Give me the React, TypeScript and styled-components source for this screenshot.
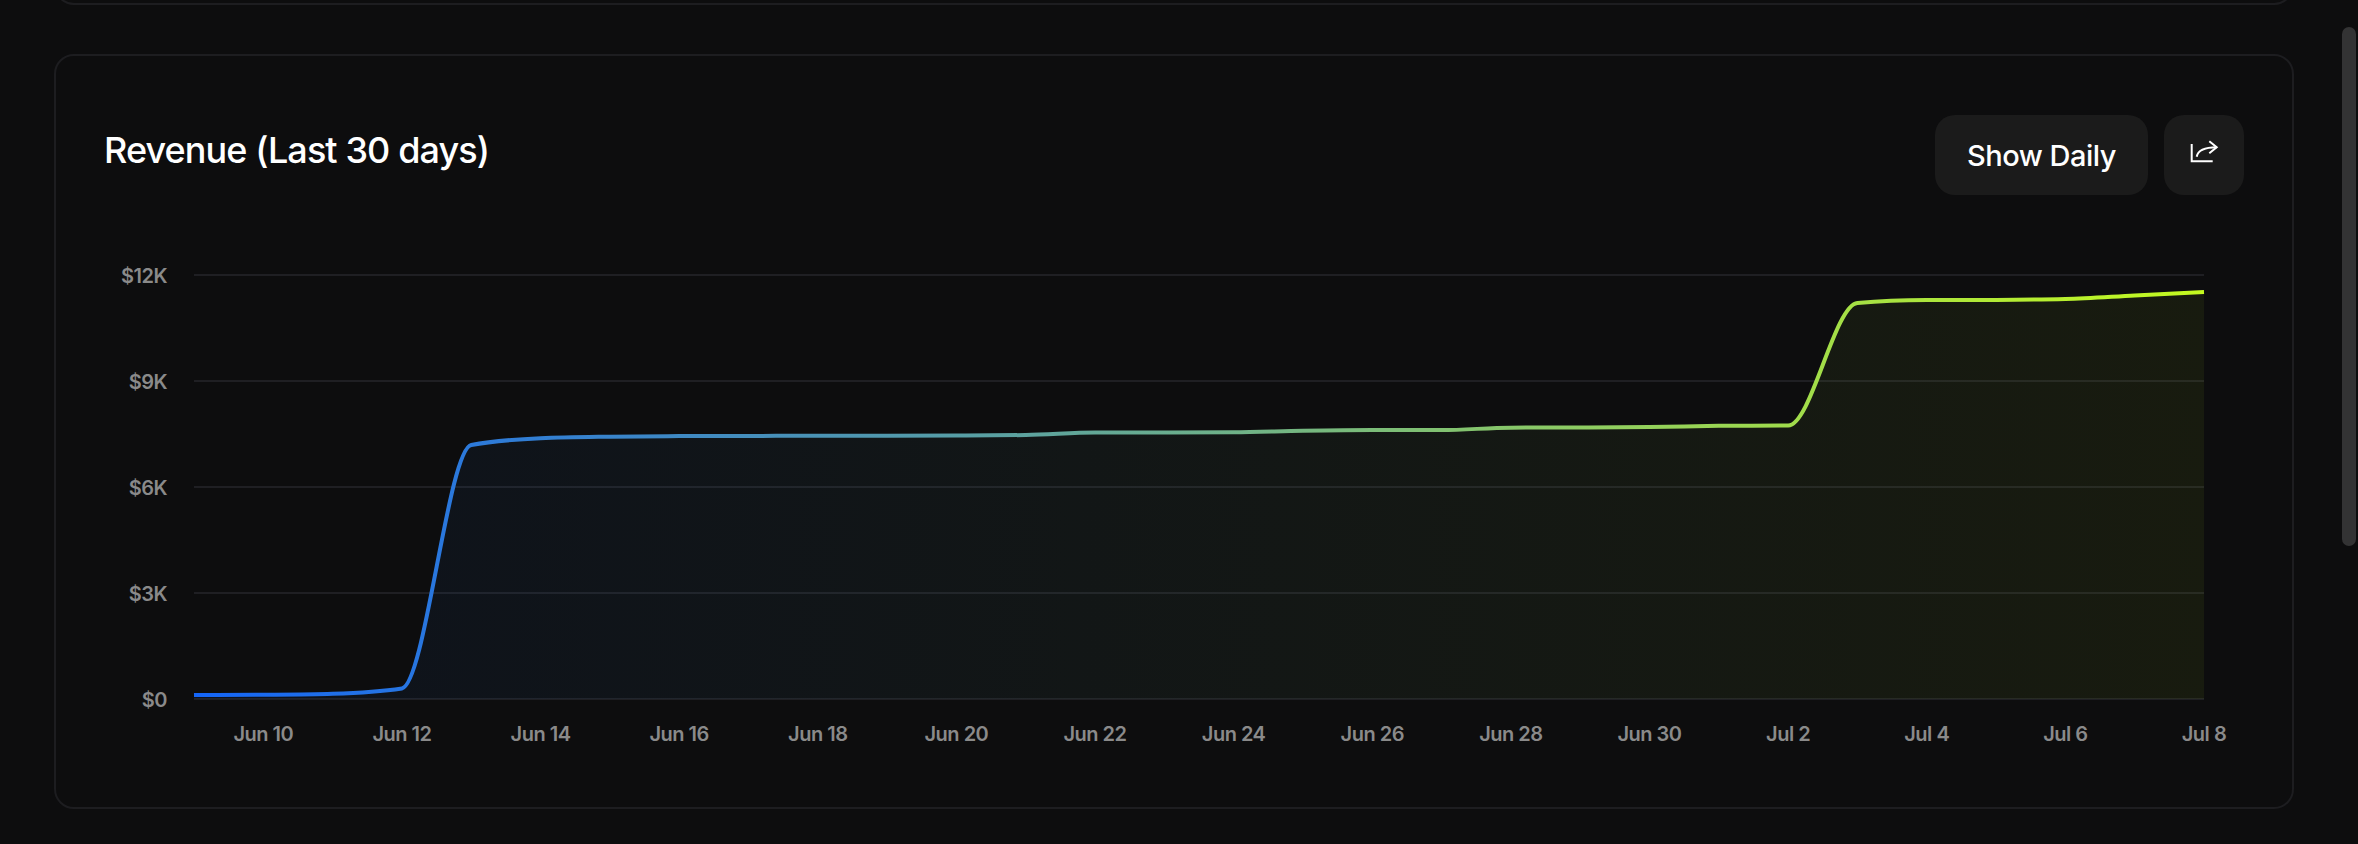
import React from "react";
import styled, { createGlobalStyle } from "styled-components";

const GlobalStyle = createGlobalStyle`
  html, body {
    margin: 0;
    padding: 0;
    height: 100%;
    overflow: hidden;
    background: #0d0d0e;
  }
`;

const Page = styled.div`
  display: flex;
  width: 2358px;
  height: 844px;
  overflow: hidden;
  background: #0d0d0e;
  font-family: Inter, "Liberation Sans", sans-serif;
`;

const Content = styled.main`
  flex: 1;
  min-width: 0;
  display: flex;
  flex-direction: column;
  gap: 49px;
  padding: 0 48px 0 54px;
`;

const PrevCard = styled.section`
  height: 40px;
  margin-top: -35px;
  flex-shrink: 0;
  box-sizing: border-box;
  border: 2px solid #1d1d20;
  border-radius: 20px;
`;

const Card = styled.section`
  box-sizing: border-box;
  height: 755px;
  flex-shrink: 0;
  padding: 59px 48px 48px;
  border: 2px solid #1d1d20;
  border-radius: 20px;
`;

const Header = styled.header`
  display: flex;
  justify-content: space-between;
  align-items: flex-start;
  height: 80px;
  margin-bottom: 44px;
`;

const Title = styled.h2`
  margin: 0;
  font-size: 36px;
  line-height: 70px;
  font-weight: 500;
  letter-spacing: -0.9px;
  color: #fff;
`;

const Actions = styled.div`
  display: flex;
  gap: 16px;
`;

const Button = styled.button<{ $square?: boolean }>`
  display: flex;
  align-items: center;
  justify-content: center;
  height: 80px;
  width: ${(p) => (p.$square ? "80px" : "213px")};
  padding: 0;
  border: none;
  border-radius: 20px;
  background: #1b1b1b;
  color: #fff;
  font-family: inherit;
  font-size: 29px;
  font-weight: 500;
  letter-spacing: -0.5px;
`;

const ChartSvg = styled.svg`
  display: block;
  width: 2140px;
  height: 520px;
  overflow: visible;
`;

const AxisLabel = styled.text`
  fill: #8a8a8a;
  font-family: Inter, "Liberation Sans", sans-serif;
  font-size: 20px;
  font-weight: 600;
  letter-spacing: -0.5px;
`;

const ScrollTrack = styled.div`
  flex-shrink: 0;
  width: 16px;
  padding: 27px 2px 0 0;
  box-sizing: border-box;
`;

const ScrollThumb = styled.div`
  height: 519px;
  border-radius: 7px;
  background: #333334;
`;

// chart geometry, svg local pixels
const LEFT = 90;
const RIGHT = 2100;
const ZERO_Y = 460;
const PX_PER_3K = 106;

const revenue = [
  110, 120, 150, 300, 7190, 7380, 7425, 7440, 7445, 7450, 7450, 7455, 7470,
  7540, 7545, 7550, 7590, 7610, 7610, 7680, 7685, 7695, 7730, 7740, 11207,
  11290, 11295, 11320, 11420, 11520,
];

const yTicks = [
  { label: "$0", value: 0 },
  { label: "$3K", value: 3000 },
  { label: "$6K", value: 6000 },
  { label: "$9K", value: 9000 },
  { label: "$12K", value: 12000 },
];

const xLabels = [
  "Jun 10", "Jun 12", "Jun 14", "Jun 16", "Jun 18", "Jun 20", "Jun 22",
  "Jun 24", "Jun 26", "Jun 28", "Jun 30", "Jul 2", "Jul 4", "Jul 6", "Jul 8",
];

const step = (RIGHT - LEFT) / (revenue.length - 1);
const toY = (v: number) => ZERO_Y - (v / 3000) * PX_PER_3K;
const points = revenue.map((v, i) => [LEFT + i * step, toY(v)] as const);

// monotone cubic, same idea as a monotoneX curve
const monotonePath = (pts: ReadonlyArray<readonly [number, number]>) => {
  const n = pts.length;
  const slopes: number[] = [];
  for (let i = 0; i < n - 1; i++) {
    slopes.push((pts[i + 1][1] - pts[i][1]) / (pts[i + 1][0] - pts[i][0]));
  }
  const tangents = pts.map((_, i) => {
    if (i === 0) return slopes[0];
    if (i === n - 1) return slopes[n - 2];
    const a = slopes[i - 1];
    const b = slopes[i];
    if (a * b <= 0) return 0;
    const size = Math.min(Math.abs(a), Math.abs(b), Math.abs(a + b) / 4) * 2;
    return a > 0 ? size : -size;
  });
  let d = `M${pts[0][0]},${pts[0][1]}`;
  for (let i = 0; i < n - 1; i++) {
    const dx = (pts[i + 1][0] - pts[i][0]) / 3;
    d += `C${pts[i][0] + dx},${pts[i][1] + dx * tangents[i]} ${pts[i + 1][0] - dx},${
      pts[i + 1][1] - dx * tangents[i + 1]
    } ${pts[i + 1][0]},${pts[i + 1][1]}`;
  }
  return d;
};

const linePath = monotonePath(points);
const areaPath = `${linePath}L${RIGHT},${ZERO_Y}L${LEFT},${ZERO_Y}Z`;

const ShareIcon = () => (
  <svg width="32" height="32" viewBox="0 0 32 32" fill="none" stroke="#fff" strokeWidth="2">
    <path d="M3.7 5V22.3H24.7" />
    <path d="M8.7 17.7C10 11 18 8.3 28.7 8.3" />
    <path d="M21.3 2.3L28.7 8.3L21.3 14.3" />
  </svg>
);

const RevenueChart = () => (
  <ChartSvg viewBox="0 0 2140 520">
    <defs>
      <linearGradient id="rev" gradientUnits="userSpaceOnUse" x1={LEFT} x2={RIGHT} y1="0" y2="0">
        <stop offset="0" stopColor="#1465f8" />
        <stop offset="1" stopColor="#c4fa1f" />
      </linearGradient>
    </defs>
    {yTicks.map((t) => (
      <g key={t.label}>
        <line x1={LEFT} x2={RIGHT} y1={toY(t.value)} y2={toY(t.value)} stroke="#1f1f23" strokeWidth="2" />
        <AxisLabel x={63} y={toY(t.value) + 8} textAnchor="end">
          {t.label}
        </AxisLabel>
      </g>
    ))}
    <path d={areaPath} fill="url(#rev)" fillOpacity="0.06" />
    <path d={linePath} fill="none" stroke="url(#rev)" strokeWidth="4" />
    {xLabels.map((label, i) => (
      <AxisLabel key={label} x={LEFT + (i * 2 + 1) * step} y={502} textAnchor="middle">
        {label}
      </AxisLabel>
    ))}
  </ChartSvg>
);

export default function App() {
  return (
    <Page>
      <GlobalStyle />
      <Content>
        <PrevCard />
        <Card>
          <Header>
            <Title>Revenue (Last 30 days)</Title>
            <Actions>
              <Button>Show Daily</Button>
              <Button $square aria-label="Share">
                <ShareIcon />
              </Button>
            </Actions>
          </Header>
          <RevenueChart />
        </Card>
      </Content>
      <ScrollTrack>
        <ScrollThumb />
      </ScrollTrack>
    </Page>
  );
}
